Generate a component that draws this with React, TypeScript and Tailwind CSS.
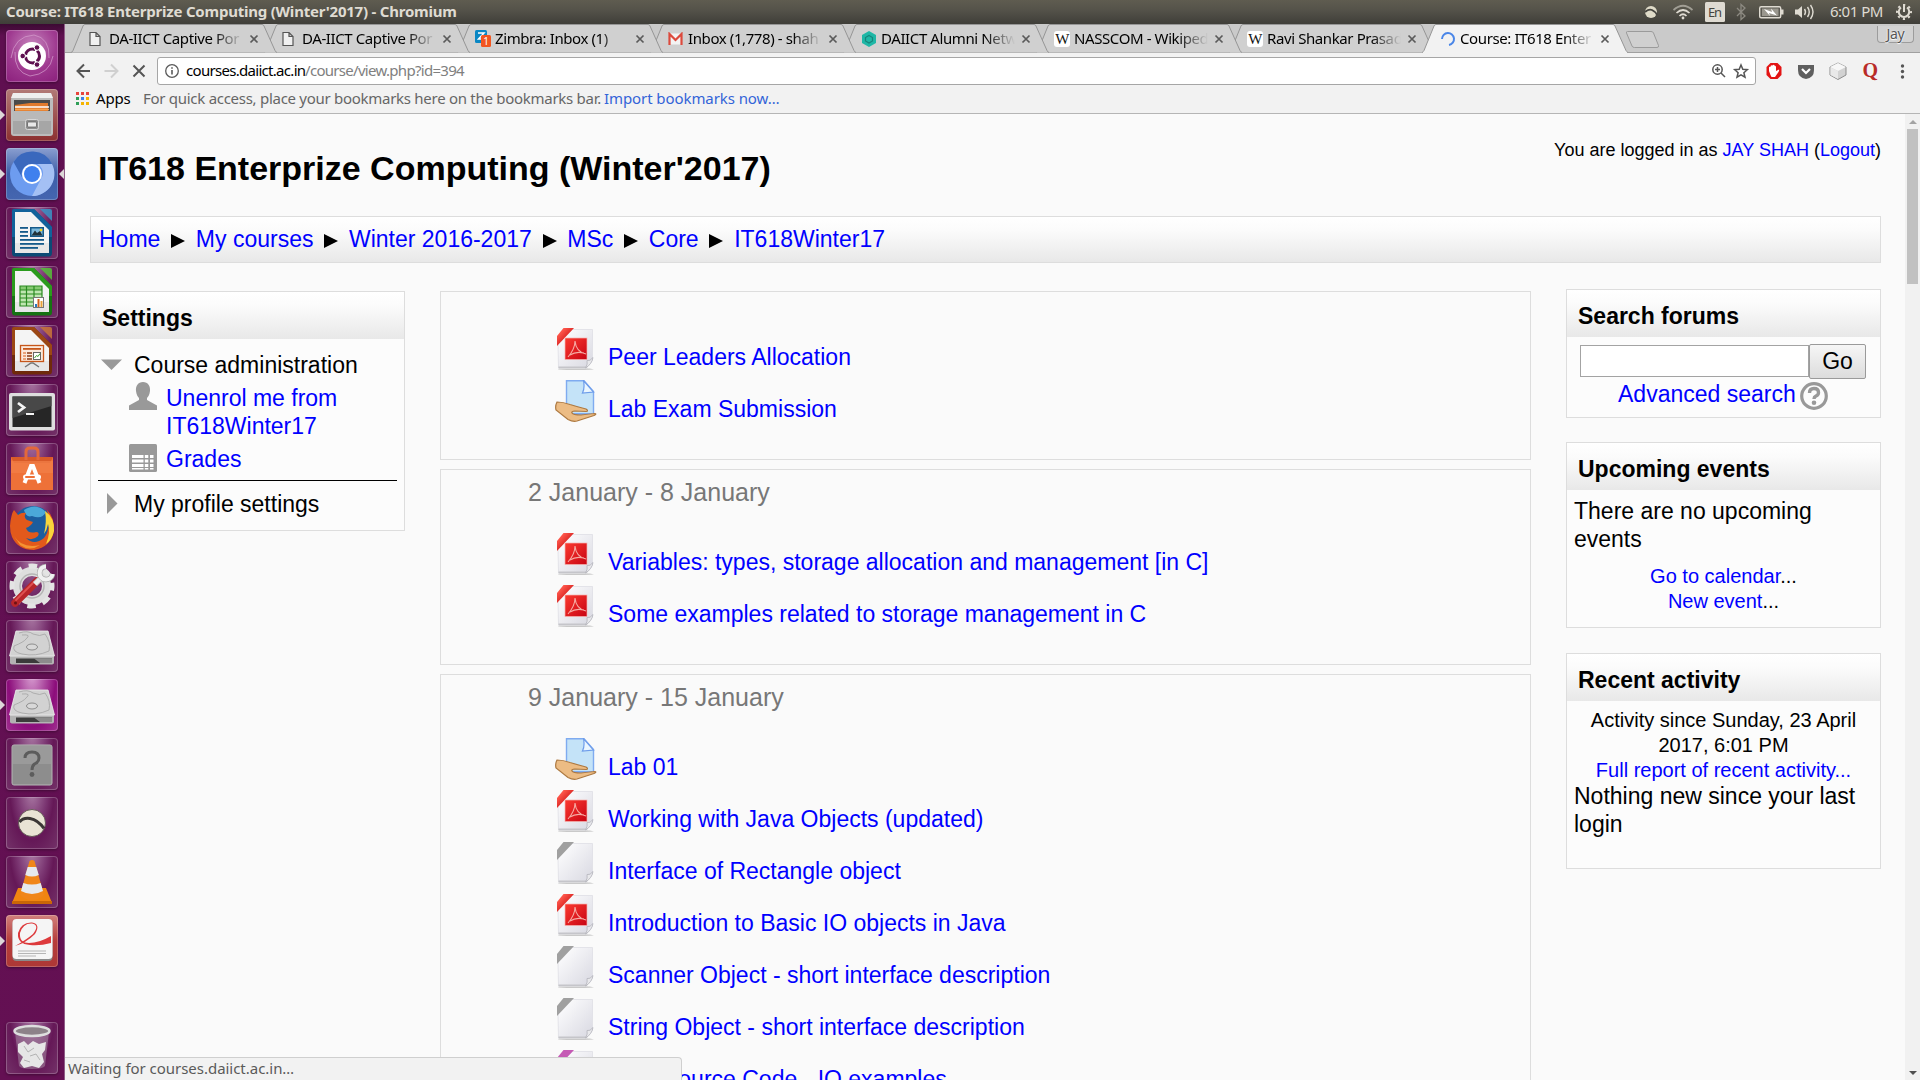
import React from "react";

const UI = "font-['Noto_Sans','Open_Sans',sans-serif]";

/* ---------- launcher ---------- */

function Tile({ bg, tall, left, right, children }: { bg: string; tall?: boolean; left?: boolean; right?: boolean; children: React.ReactNode }) {
  return (
    <div className={"relative flex h-[52px] w-16 shrink-0 justify-center " + (tall ? "mt-auto" : "")}>
      {left && <div className="absolute left-0 top-[21px] h-0 w-0 border-y-[5px] border-l-[5px] border-y-transparent border-l-[#dcd8d8]" />}
      {right && <div className="absolute right-0 top-[21px] h-0 w-0 border-y-[5px] border-r-[5px] border-y-transparent border-r-[#dcd8d8]" />}
      <div className={"h-[52px] w-[52px] overflow-hidden rounded-[4px] shadow-[inset_0_0_0_1px_rgba(255,255,255,0.22),0_1px_3px_rgba(0,0,0,0.35)] " + bg}>
        <svg width="52" height="52" viewBox="0 0 52 52">
          {children}
        </svg>
      </div>
    </div>
  );
}

const PLAIN = "bg-[radial-gradient(ellipse_at_50%_-10%,#ab7ba5_0%,#7b3672_40%,#651857_60%,#743369_100%)]";

function OfficeDoc({ dark, mid, light, children }: { dark: string; mid: string; light: string; children: React.ReactNode }) {
  return (
    <>
      <path d={"M8 2 H28 L46 20 V46 Q46 49.5 43 49.5 H9 Q6 49.5 6 46 V4 Q6 2 8 2Z"} fill={dark} />
      <path d="M8 2 H28 L46 20 V30 H6 V4 Q6 2 8 2Z" fill={mid} />
      <path d="M34 2 H44 Q46 2 46 4 V14Z" fill={light} opacity="0.85" />
      <path d="M9 5 H25 L43 23 V46 H9Z" fill="#f4f4f4" />
      <path d="M9 36 H43 V46 H9Z" fill="#d9d9d9" opacity="0.5" />
      {children}
    </>
  );
}

function Drive() {
  return (
    <>
      <path d="M10 11 H42 L48 36 V42 Q48 44 46 44 H6 Q4 44 4 42 V36Z" fill="#bdbdbd" />
      <path d="M10 11 H42 L48.500 36 H3.500Z" fill="#d2d2d2" stroke="#ebebeb" strokeWidth="0.8" />
      <path d="M13 13 Q22 10 27 14 Q34 17 39 14 Q45 22 43 31 Q30 37 16 34 Q6 32 8 26 Q18 22 20 19 Q26 14 16 15" fill="none" stroke="#a3a3a3" strokeWidth="0.8" />
      <ellipse cx="26" cy="27" rx="5.500" ry="3" fill="#d8d8d8" stroke="#8d8d8d" />
      <path d="M4 37 H48 V41 Q48 44.500 46 44.500 H6 Q4 44.500 4 41Z" fill="#b3b3b3" />
      <path d="M10 38.500 H46 V43 H10Z" fill="#3b3b3b" />
      <path d="M28 38.500 H46 V43 H34Z" fill="#8c8c8c" />
    </>
  );
}

function Launcher() {
  return (
    <aside className="relative flex w-[65px] shrink-0 flex-col gap-[7px] border-r border-[#8f5c87] bg-[linear-gradient(180deg,#3c0a33_0px,#5f0f50_12px,#641053_100%)] pb-[6px] pt-[6px]">
      <Tile bg="bg-[radial-gradient(circle_at_50%_30%,#c684bd_0%,#9f3a90_55%,#8b1f7c_100%)]">
        <path d="M5 28 Q8 6 28 5 Q44 8 43 28" fill="none" stroke="#d5a0cf" strokeWidth="1" opacity="0.7" />
        <path d="M47 26 Q44 44 24 46 Q8 42 9 22" fill="none" stroke="#d5a0cf" strokeWidth="1" opacity="0.7" />
        <circle cx="26" cy="26" r="14" fill="#fff" />
        <circle cx="26.500" cy="26" r="7" fill="none" stroke="#5e1050" strokeWidth="3" strokeDasharray="12.700 2" strokeDashoffset="-8.300" />
        <circle cx="16.700" cy="26" r="2.800" fill="#5e1050" stroke="#fff" />
        <circle cx="31" cy="17.500" r="2.800" fill="#5e1050" stroke="#fff" />
        <circle cx="31" cy="34.600" r="2.800" fill="#5e1050" stroke="#fff" />
      </Tile>
      <Tile left bg="bg-[linear-gradient(180deg,#b27a77,#8c3030)]">
        <path d="M7 4 H45 L47 10 V44 Q47 47 44 47 H8 Q5 47 5 44 V10Z" fill="#bcbcbc" />
        <path d="M7 4 H45 L47 9 H5Z" fill="#efefef" />
        <path d="M8 11 H44 V22 H8Z" fill="#4a4a4a" />
        <path d="M9 16 L24 14 H42 V22 H9Z" fill="#e07a2d" />
        <path d="M9 18 H43" stroke="#fff" strokeWidth="1.300" />
        <path d="M9 20.500 H43" stroke="#f6a352" strokeWidth="1.500" />
        <path d="M7 22 H45 V45 H7Z" fill="#a6a6a6" />
        <path d="M7 22 H45 V32 H7Z" fill="#b9b9b9" />
        <rect x="19.500" y="30.500" width="13" height="10" rx="2" fill="#8e8e8e" stroke="#d8d8d8" />
        <rect x="21.500" y="33" width="9" height="5" rx="1" fill="#e8e8e8" stroke="#555" strokeWidth="0.7" />
      </Tile>
      <Tile left right bg="bg-[linear-gradient(180deg,#8a9fd0,#3d5ea8_50%,#4566b0)]">
        <circle cx="26" cy="26" r="22" fill="#6d9cf0" />
        <path d="M7.500 14 A22 22 0 0 1 46 16 H26 A10 10 0 0 0 17 31Z" fill="#3a68bd" />
        <path d="M46 16 A22 22 0 0 1 26 48 L35 31 A10 10 0 0 0 31 16Z" fill="#a4c0f4" />
        <circle cx="26" cy="26" r="10" fill="#fff" />
        <circle cx="26" cy="26" r="8" fill="#3f80ee" />
      </Tile>
      <Tile bg={PLAIN}>
        <OfficeDoc dark="#0b4a75" mid="#11629b" light="#3a94c5">
          <g fill="#155a8a">
            <rect x="14" y="20" width="8" height="1.800" /><rect x="14" y="24" width="8" height="1.800" /><rect x="14" y="28" width="8" height="1.800" />
            <rect x="14" y="32" width="24" height="1.800" /><rect x="14" y="36" width="24" height="1.800" /><rect x="14" y="40" width="18" height="1.800" />
            <rect x="24" y="20" width="14" height="10" />
          </g>
          <rect x="25.500" y="21.500" width="11" height="7" fill="#7cb9dc" />
          <path d="M25.500 28.500 L29 23.500 L31 26 L34 24 L36.500 28.500Z" fill="#20323a" />
          <circle cx="35" cy="23" r="1.300" fill="#f2d21b" />
        </OfficeDoc>
      </Tile>
      <Tile bg={PLAIN}>
        <OfficeDoc dark="#157312" mid="#2b9b1d" light="#56c03a">
          <rect x="14" y="20" width="22" height="20" fill="#bfe6b1" />
          <rect x="14" y="20" width="22" height="4" fill="#86ca72" />
          <path d="M14 20 H36 V40 H14Z M14 24 H36 M14 28 H36 M14 32 H36 M14 36 H36 M20.500 20 V40 M28 20 V40" fill="none" stroke="#2a8a20" strokeWidth="1.200" />
          <rect x="27.500" y="31.500" width="10" height="10" fill="#fff" stroke="#777" />
          <path d="M29 38 h2 v3 h-2z" fill="#2b78c0" /><path d="M31.500 33 h2 v8 h-2z" fill="#d6601b" /><path d="M34.500 35 h2 v6 h-2z" fill="#e8a33a" />
        </OfficeDoc>
      </Tile>
      <Tile bg={PLAIN}>
        <OfficeDoc dark="#6f2a0b" mid="#9b4714" light="#c87638">
          <rect x="14.500" y="20.500" width="23" height="16" fill="#fbe9dc" stroke="#c6561a" strokeWidth="1.300" />
          <rect x="17" y="23" width="18" height="1.800" fill="#c6561a" />
          <path d="M17 28 h3 M17 31 h3 M17 34 h3" stroke="#e38b58" strokeWidth="1.600" />
          <path d="M21 28 h5 M21 31 h5 M21 34 h5" stroke="#8a3b14" strokeWidth="1.600" />
          <rect x="27.500" y="27.500" width="7" height="7" fill="#fff" stroke="#666" />
          <path d="M28.500 33 L30.500 30.500 L32 31.500 L34 28.500" stroke="#3a9a2a" fill="none" />
          <path d="M19 42 L25 38 H27 L33 42" fill="none" stroke="#777" strokeWidth="1.500" />
        </OfficeDoc>
      </Tile>
      <Tile bg={PLAIN}>
        <rect x="3" y="9" width="46" height="37.500" rx="2" fill="#dedede" />
        <rect x="6.500" y="12.500" width="39" height="30.500" fill="#262626" />
        <path d="M6.500 12.500 H45.500 V22 L6.500 34Z" fill="#484848" />
        <path d="M12 19 L18 23.500 L12 28" fill="none" stroke="#f4f4f4" strokeWidth="2.800" />
        <path d="M20 30 H28" stroke="#f4f4f4" strokeWidth="2" />
      </Tile>
      <Tile bg={PLAIN}>
        <path d="M5 14 H47 V47 H5Z" fill="#ee7138" />
        <path d="M5 14 H47 L44 20 H8Z" fill="#d95b28" />
        <path d="M5 18 H47 V30 H5Z" fill="#f28049" opacity="0.7" />
        <path d="M20 17 V9 Q20 5 24 5 H28 Q32 5 32 9 V17" fill="none" stroke="#e3683b" strokeWidth="3" />
        <path d="M18.500 40 L25 23 H27 L33.500 40" fill="none" stroke="#fff" strokeWidth="4" />
        <rect x="17" y="31.500" width="18" height="5" rx="2.500" fill="#fff" />
        <rect x="19" y="33" width="10" height="2" rx="1" fill="#ee7138" />
      </Tile>
      <Tile bg={PLAIN}>
        <circle cx="27" cy="24" r="20" fill="#1c5d9e" />
        <path d="M18 8 Q30 0 40 10 Q36 18 26 14 Q20 16 18 8Z" fill="#4ba8d8" />
        <path d="M4 24 Q5 12 8 8 L12 13 Q16 10 20 11 Q17 15 21 18 L27 20 Q25 24 20 26 Q22 32 30 30 Q34 30 32 34 Q27 39 20 36 Q28 44 38 36 Q46 26 41 8 Q49 16 48 29 Q45 45 28 48 Q12 48 6 35 Q4 30 4 24Z" fill="#e2591b" />
        <path d="M39 9 Q49 16 48 29 Q46 38 40 42 Q45 30 42 22 Q41 28 38 32 Q41 20 39 9Z" fill="#f9d53c" />
        <path d="M8 34 Q16 47 34 43 Q24 50 14 43Z" fill="#f59332" />
      </Tile>
      <Tile bg={PLAIN}>
        <circle cx="26" cy="25" r="14.500" fill="none" stroke="#dedede" strokeWidth="9" />
        <circle cx="26" cy="25" r="20" fill="none" stroke="#e4e4e4" strokeWidth="5" strokeDasharray="8.500 7.208" strokeDashoffset="4" />
        <circle cx="26" cy="25" r="12" fill="none" stroke="#b5b5b5" strokeWidth="1.500" />
        <path d="M9 42 L31 20" stroke="#b8262a" strokeWidth="7.500" strokeLinecap="round" />
        <path d="M10 39 L28 21" stroke="#e05252" strokeWidth="1.800" strokeLinecap="round" />
        <path d="M29 23 L37 15" stroke="#c4c4c4" strokeWidth="6" />
        <path d="M29 23 L37 15" stroke="#ececec" strokeWidth="4" />
        <path d="M40 5.500 A6.500 6.500 0 1 0 46.500 13" fill="none" stroke="#aaaaaa" strokeWidth="5.500" />
        <path d="M40 5.500 A6.500 6.500 0 1 0 46.500 13" fill="none" stroke="#f0f0f0" strokeWidth="4.200" />
        <circle cx="9.500" cy="42" r="1.500" fill="#6b1114" />
      </Tile>
      <Tile bg={PLAIN}><Drive /></Tile>
      <Tile left bg="bg-[radial-gradient(ellipse_at_50%_-10%,#d9a0d2_0%,#a8439b_40%,#8c0d7b_65%,#a0308f_100%)]"><Drive /></Tile>
      <Tile bg={PLAIN}>
        <rect x="6" y="7" width="40" height="40" rx="2" fill="#8d8d8d" stroke="#b5b5b5" />
        <rect x="7" y="8" width="38" height="18" fill="#a0a0a0" opacity="0.7" />
        <path d="M19 20 Q19 14 26 14 Q33 14 33 20 Q33 24 28.500 26 Q26 28 26 32" fill="none" stroke="#5c5c5c" strokeWidth="3" />
        <circle cx="26" cy="36.500" r="2.400" fill="#5c5c5c" />
      </Tile>
      <Tile bg={PLAIN}>
        <circle cx="26" cy="26" r="13.500" fill="#e9e4d4" stroke="#504a44" strokeWidth="0.8" />
        <path d="M13.500 25 Q17 20.500 24 21.500 Q32 23 38 31.500" fill="none" stroke="#3b3835" strokeWidth="3" />
      </Tile>
      <Tile bg={PLAIN}>
        <path d="M12 32 H40 L46 47 H6Z" fill="#f08510" />
        <path d="M6 45 H46 V48 H6Z" fill="#c96607" />
        <path d="M23.500 5 Q26 3 28.500 5 L38 39 Q33 44 26 44 Q19 44 14 39Z" fill="#f0861a" />
        <path d="M21.700 11 H30.300 L32.800 19 Q26 22 19.300 19Z" fill="#e6e9ee" />
        <path d="M17.300 27 Q26 30 34.700 27 L37 35 Q26 41 15 35Z" fill="#e6e9ee" />
      </Tile>
      <Tile left bg="bg-[linear-gradient(180deg,#d0807c,#b73c3a_50%,#ad3836)]">
        <rect x="6.500" y="5" width="40" height="41" rx="4" fill="#8a8a8a" />
        <rect x="6.500" y="4" width="40" height="40" rx="4" fill="#f5f5f5" />
        <path d="M9 31 Q20 25 27 19 Q34 10 26 8.500 Q17 8 14 18 Q13 28 23 28 Q33 28 45 21 V28 Q34 31 24 30 Q11 29 12 18 Q15 7 26 7.500 Q35 9 29 19 Q20 28 9 31Z" fill="#dd3a3c" />
        <path d="M12 36 H40 M12 38.500 H40 M12 41 H30" stroke="#b5b5b5" />
      </Tile>
      <Tile tall bg={PLAIN}>
        <path d="M9 10 H43 L39 44 Q37 47 26 47 Q15 47 13 44Z" fill="#a58aa3" opacity="0.55" />
        <path d="M12 22 L18 19 L22 23 L27 19 L33 22 L40 20 L39 28 L36 32 L38 40 L33 46 L26 44 L18 46 L14 41 L17 35 L12 30Z" fill="#e6e6e6" />
        <path d="M18 24 L22 30 L28 26 M24 34 L30 32 L34 38 M18 38 L24 40" stroke="#b3b3b3" fill="none" />
        <ellipse cx="26" cy="9" rx="17.500" ry="5" fill="#8d8289" stroke="#dedede" strokeWidth="2.500" />
      </Tile>
    </aside>
  );
}

/* ---------- desktop panel ---------- */

function Panel() {
  return (
    <header className={UI + " flex h-6 shrink-0 items-center bg-[linear-gradient(180deg,#5f5c50_0%,#55534a_40%,#3f3e39_100%)] pl-[6px] text-[#dfdbd2]"}>
      <div className="w-[1639px] whitespace-nowrap pb-[2px] text-[15px] font-bold leading-[22px] tracking-[-0.22px]">Course: IT618 Enterprize Computing (Winter'2017) - Chromium</div>
      <svg width="185" height="24" viewBox="1645 0 185 24" className="shrink-0">
        <circle cx="1651" cy="12" r="6" fill="#dfdbc8" />
        <path d="M1645 12 Q1649 8.500 1652 10 Q1656 12 1657 15" fill="none" stroke="#45443f" strokeWidth="1.800" />
        <g fill="none" stroke="#dfdbd2" strokeWidth="1.700">
          <path d="M1673.500 10 Q1683 1.500 1692.500 10" opacity="0.55" />
          <path d="M1676.500 13 Q1683 7 1689.500 13" />
          <path d="M1679.500 16 Q1683 12.500 1686.500 16" />
        </g>
        <circle cx="1683" cy="18" r="1.400" fill="#dfdbd2" />
        <rect x="1705" y="2" width="20" height="20" rx="1.500" fill="#dfdbd2" />
        <text x="1708" y="17" fontSize="13" fill="#45443f" fontFamily="Noto Sans" textLength="14">En</text>
        <path d="M1737 8 L1745 16 L1741 19.500 V4.500 L1745 8 L1737 16" fill="none" stroke="#8d8a82" strokeWidth="1.300" />
        <rect x="1759.700" y="6.700" width="21" height="11" rx="1.500" fill="#5c5a53" stroke="#dfdbd2" strokeWidth="1.400" />
        <rect x="1762" y="8.500" width="16.500" height="7.500" fill="#9a978e" />
        <rect x="1781" y="9.500" width="2.500" height="5" fill="#dfdbd2" />
        <path d="M1764 9 L1772 12 L1771 8.500 L1777 15.500 L1769 13 L1770 16Z" fill="#fff" />
        <path d="M1795 9.500 H1798 L1802 6 V18 L1798 14.500 H1795Z" fill="#dfdbd2" />
        <g fill="none" stroke="#dfdbd2" strokeWidth="1.400">
          <path d="M1804.500 9 Q1806.500 12 1804.500 15" />
          <path d="M1807.500 7 Q1811 12 1807.500 17" />
          <path d="M1810.500 5 Q1815.500 12 1810.500 19" />
        </g>
      </svg>
      <div className="w-[64px] whitespace-nowrap pb-[2px] text-[15px] leading-[22px] tracking-[-0.5px]">6:01 PM</div>
      <svg width="20" height="24" viewBox="0 0 20 24" fill="none" stroke="#dfdbd2">
        <path d="M7 7.500 A5.200 5.200 0 1 0 13 7.500" strokeWidth="2" />
        <path d="M10 4 V12" strokeWidth="2" />
        <circle cx="10" cy="12" r="7" strokeWidth="2" strokeDasharray="2.200 3.298" strokeDashoffset="1.100" />
      </svg>
    </header>
  );
}

/* ---------- browser chrome ---------- */

const PageIcon = () => (
  <svg width="16" height="16" viewBox="0 0 16 16" fill="#f0f0f0" stroke="#555" strokeWidth="1.200">
    <path d="M1 1.500 H7 L11 5.500 V14.500 H1Z M7 1.500 V5.500 H11" />
  </svg>
);
const WikiIcon = () => (
  <span className="flex h-4 w-4 items-center justify-center rounded-[3px] bg-white font-['Liberation_Serif',serif] text-[15px] leading-4 tracking-tighter text-[#111]">W</span>
);
const ZimbraIcon = () => (
  <svg width="16" height="17" viewBox="0 0 16 17">
    <rect width="12" height="13" rx="1.500" fill="#0a87c4" />
    <path d="M3 3 H9 L3.500 9 H8" fill="none" stroke="#fff" strokeWidth="1.500" />
    <rect x="6" y="5" width="10" height="12" rx="1.500" fill="#f2551f" />
    <text x="8.200" y="15" fontSize="10" fill="#fff" fontFamily="Noto Sans">1</text>
  </svg>
);
const GmailIcon = () => (
  <svg width="16" height="14" viewBox="0 0 16 14">
    <rect x="1" y="1.500" width="13" height="11" fill="#f3f3f3" />
    <path d="M1.500 13 V2 L7.500 8 L13.500 2 V13" fill="none" stroke="#dc4a3d" strokeWidth="2.200" />
  </svg>
);
const HexIcon = () => (
  <svg width="16" height="16" viewBox="0 0 16 16">
    <path d="M8 0 L15 4 V12 L8 16 L1 12 V4Z" fill="#1fb7a6" />
    <path d="M8 4.500 L11.500 6.500 V10 L8 12 L4.500 10 V6.500Z" fill="none" stroke="#17847a" strokeWidth="1.200" />
  </svg>
);
const SpinIcon = () => (
  <svg width="16" height="16" viewBox="0 0 16 16">
    <path d="M2 8 A6 6 0 1 1 9 14" fill="none" stroke="#4a86e8" strokeWidth="2" />
  </svg>
);

const tabs = [
  { t: "DA-IICT Captive Por", i: <PageIcon />, z: "z-[8]" },
  { t: "DA-IICT Captive Por", i: <PageIcon />, z: "z-[7]" },
  { t: "Zimbra: Inbox (1)", i: <ZimbraIcon />, z: "z-[6]" },
  { t: "Inbox (1,778) - shah", i: <GmailIcon />, z: "z-[5]" },
  { t: "DAIICT Alumni Netw", i: <HexIcon />, z: "z-[4]" },
  { t: "NASSCOM - Wikiped", i: <WikiIcon />, z: "z-[3]" },
  { t: "Ravi Shankar Prasad", i: <WikiIcon />, z: "z-[2]" },
  { t: "Course: IT618 Enter", i: <SpinIcon />, z: "z-[9]", on: true },
];

function TabStrip() {
  return (
    <div className="relative flex h-[29px] bg-[#cacaca] pl-[6px] shadow-[inset_0_-1px_0_#a0a0a0]">
      {tabs.map((t, i) => (
        <div key={i} className={"relative flex h-[29px] w-[193px] shrink-0 items-center pl-[18px] " + t.z}>
          <svg className="absolute left-0 top-0" width="207" height="29" viewBox="0 0 207 29">
            <path d="M0 28.500 Q1.500 28 2 26.500 L12 2 Q12.600 .5 14 .5 H191 Q192.500 .5 193 2 L204 26.500 Q204.500 28 206 28.500" fill={t.on ? "#f2f2f2" : "#d0d0d0"} stroke="#969696" />
            {t.on && <path d="M1 28.500 H205" stroke="#f2f2f2" strokeWidth="1.500" />}
          </svg>
          <div className="relative flex w-4 shrink-0 justify-center">{t.i}</div>
          <div className={"relative mb-[2px] ml-1 h-[22px] w-[134px] whitespace-nowrap text-[15px] leading-[22px] tracking-[-0.4px] text-black [mask-image:linear-gradient(90deg,#000_104px,transparent_134px)]"}>{t.t}</div>
          <svg className="relative ml-[5px]" width="12" height="12" viewBox="0 0 12 12">
            <path d="M2.500 2.500 L9.500 9.500 M9.500 2.500 L2.500 9.500" stroke="#5a5a5a" strokeWidth="1.700" />
          </svg>
        </div>
      ))}
      <svg className="ml-[10px] mt-[6px]" width="36" height="19" viewBox="0 0 36 19">
        <path d="M2.500 1.500 H26 Q28 1.500 28.500 3 L33.500 15.500 Q34 17.500 32 17.500 H9.500 Q7.500 17.500 7 16 L1.500 3 Q1 1.500 2.500 1.500Z" fill="#d0d0d0" stroke="#9b9b9b" />
      </svg>
      <div className="ml-auto mr-[6px] mt-[2px] flex h-[17px] w-[37px] items-center justify-center rounded-b-[4px] border border-t-0 border-[#9c9c9c] bg-[#d2d2d2] text-[14px] leading-4 tracking-tight text-[#555] [text-shadow:0_0_2px_#fff,0_1px_1px_#fff]">Jay</div>
    </div>
  );
}

function Toolbar() {
  return (
    <div className="flex h-[36px] items-center bg-[#f2f2f2]">
      <svg width="92" height="28" viewBox="65 57 92 28" fill="none" strokeWidth="2">
        <path d="M90 71 H77.500 M84 64.500 L77.500 71 L84 77.500" stroke="#555" />
        <path d="M104.500 71 H117 M111 64.500 L117.500 71 L111 77.500" stroke="#d0d0d0" />
        <path d="M133.500 65.500 L144.500 76.500 M144.500 65.500 L133.500 76.500" stroke="#555" />
      </svg>
      <div className="flex h-7 w-[1599px] items-center rounded-[3px] border border-[#a6a6a6] bg-white pl-[6px] text-[15px]">
        <svg width="16" height="16" viewBox="0 0 16 16" fill="none" stroke="#5a5a5a" strokeWidth="1.300">
          <circle cx="8" cy="8" r="6.300" /><path d="M8 7 V11.500 M8 4.300 V5.800" strokeWidth="1.600" />
        </svg>
        <div className="mb-[2px] ml-[6px] w-[119px] whitespace-nowrap tracking-[-0.7px] text-black">courses.daiict.ac.in</div>
        <div className="mb-[2px] whitespace-nowrap tracking-[-0.7px] text-[#808080]">/course/view.php?id=394</div>
        <svg className="ml-auto mr-[5px]" width="40" height="20" viewBox="1710 61 40 20" fill="none" stroke="#555" strokeWidth="1.500">
          <circle cx="1717.500" cy="69.500" r="4.700" /><path d="M1721 73 L1725 77 M1715 69.500 H1720 M1717.500 67 V72" />
          <path d="M1741 65 L1742.800 69.300 L1747.300 69.700 L1743.900 72.700 L1745 77.200 L1741 74.800 L1737 77.200 L1738.100 72.700 L1734.700 69.700 L1739.200 69.300Z" />
        </svg>
      </div>
      <svg width="160" height="28" viewBox="1756 57 160 28">
        <path d="M1770.500 63 H1777.500 L1781.500 67 V75 L1777.500 79 H1770.500 L1766.500 75 V67Z" fill="#e31414" />
        <path d="M1770.500 75 L1769 71 V67.500 Q1769 66.500 1770.500 67 V66 Q1771.500 65 1772.500 65.500 Q1773.500 64 1774.500 65.500 Q1776 65.500 1776 67 V71 L1779 69.500 Q1779.500 70.500 1778.500 72 L1775 77 H1771.500Z" fill="#fff" />
        <path d="M1798 65 H1814 V70 Q1814 78 1806 79 Q1798 78 1798 70Z" fill="#5f5f5f" />
        <path d="M1802 69 L1806 73 L1810 69" fill="none" stroke="#fff" strokeWidth="2.200" />
        <path d="M1838 63 L1846 67 V75 L1838 79.500 L1830 75 V67Z" fill="#d2d2d2" stroke="#8d8d8d" />
        <path d="M1830 67 L1838 71 L1846 67 L1838 63Z" fill="#f7f7f7" />
        <path d="M1830.500 67.500 L1838 71 V79 L1830.500 75Z" fill="#e9e9e9" />
        <text x="1862.500" y="77" fontFamily="Liberation Serif" fontWeight="700" fontSize="20" fill="#b92b27">Q</text>
        <g fill="#555"><circle cx="1902.500" cy="66" r="1.700" /><circle cx="1902.500" cy="71.500" r="1.700" /><circle cx="1902.500" cy="77" r="1.700" /></g>
      </svg>
    </div>
  );
}

function Bookmarks() {
  const colors = ["bg-[#e8453c]", "bg-[#e8453c]", "bg-[#e8453c]", "bg-[#2f9e57]", "bg-[#3f7fe8]", "bg-[#f5b400]", "bg-[#2f9e57]", "bg-[#f5b400]", "bg-[#f5b400]"];
  return (
    <div className="flex h-[25px] items-center border-b border-[#b5b5b5] bg-[#f2f2f2] pb-[5px] pl-[11px] text-[15px] leading-5">
      <div className="grid grid-cols-[repeat(3,3px)] gap-[2px]">
        {colors.map((c, i) => <div key={i} className={"h-[3px] w-[3px] " + c} />)}
      </div>
      <div className="mb-[2px] ml-[7px] w-[47px] tracking-[-0.2px] text-black">Apps</div>
      <div className="mb-[2px] w-[461px] whitespace-nowrap tracking-[-0.28px] text-[#666]">For quick access, place your bookmarks here on the bookmarks bar.</div>
      <div className="mb-[2px] whitespace-nowrap tracking-[-0.08px] text-[#3264d8]">Import bookmarks now…</div>
    </div>
  );
}

/* ---------- course page ---------- */

const A = ({ children, className = "" }: { children: React.ReactNode; className?: string }) => (
  <a className={"text-[#0000ff] " + className}>{children}</a>
);

function FileIcon({ kind }: { kind: string }) {
  if (kind === "assign")
    return (
      <svg width="42" height="42" viewBox="0 0 42 42">
        <path d="M11.500 .7 H29 L38.500 11.500 V35 H11.500Z" fill="#c4e3f8" stroke="#7fabf0" strokeWidth="1.400" />
        <path d="M28.500 .7 L38.500 12 L27.500 13 Q30 8 28.500 .7Z" fill="#eaf6ff" stroke="#6d9cea" strokeWidth="1.200" />
        <path d="M16 34 H37" stroke="#7fabf0" strokeWidth="2" />
        <path d="M2 22 Q8 22 15 24.500 Q23 27 31 29 Q34 31 31 31.500 L20 31 Q16 31.500 17 33 Q18 35 26 35 Q34 34 40 33.500 Q42 34 39 35.500 L22 41 Q18 42 13 39.500 L1 30 Q0 26 2 22Z" fill="#ecbc84" stroke="#ad7941" strokeWidth="1.200" />
      </svg>
    );
  const pdf = kind === "pdf";
  const c = kind === "src" ? "#c55bb5" : pdf ? "url(#ribbon)" : "#a0a0a0";
  return (
    <svg width="42" height="42" viewBox="0 0 42 42">
      <defs>
        <linearGradient id="sheet" x1="0" y1="0" x2="1" y2="1"><stop offset="0.200" stopColor="#f8f8fa" /><stop offset="1" stopColor="#d8d8e1" /></linearGradient>
        <linearGradient id="red" x1="0" y1="0" x2="1" y2="1"><stop stopColor="#fb3a30" /><stop offset="1" stopColor="#c80413" /></linearGradient>
        <linearGradient id="ribbon" x1="0" y1="0" x2="1" y2="1"><stop offset="0.200" stopColor="#ff5a4e" /><stop offset="0.600" stopColor="#d8211f" /></linearGradient>
      </defs>
      <path d="M4 40.500 H35 L39 41.500 Q20 42.500 3 41.500Z" fill="#c9c9c9" />
      <path d="M3 15 L17 1.500 H37.500 V32 Q35 37 31 40 H3.500Z" fill="url(#sheet)" stroke="#dedee4" strokeWidth="0.8" />
      <path d="M3.500 38.500 H31 L33 40.300 H3.500Z" fill="#c5c5ca" />
      <path d="M30.500 40 Q33 36 32 32.500 Q35 33.500 38 29.500 Q37 36 30.500 40Z" fill="#e9e9ec" stroke="#b4b4bb" strokeWidth="0.8" />
      <path d="M2 8 L8.500 0 H19 L2 18Z" fill={c} />
      {pdf && (
        <>
          <rect x="10" y="10" width="22" height="21.500" fill="url(#red)" stroke="#f6b4b0" strokeWidth="0.7" />
          <path d="M20 13 Q20 21 13 29 M20 13 Q21 24 31 26 M15 27 Q21 23 29 25" fill="none" stroke="#f5aaa2" strokeWidth="1.100" />
        </>
      )}
    </svg>
  );
}

function Item({ kind, children }: { kind: string; children: React.ReactNode }) {
  return (
    <li className="flex h-[52px]">
      <div className="h-[42px] w-[42px] shrink-0"><FileIcon kind={kind} /></div>
      <A className="ml-[11px] mt-[15px] h-7 whitespace-nowrap">{children}</A>
    </li>
  );
}

function Section({ title, h, children }: { title?: string; h: string; children: React.ReactNode }) {
  return (
    <section className={"shrink-0 border border-[#dddddd] bg-[#fafafa] " + h}>
      {title ? <h3 className="mt-[8px] h-[28px] pl-[87px] text-[25px] leading-7 text-[#777]">{title}</h3> : null}
      <ul className={"pl-[114px] " + (title ? "mt-[27px]" : "mt-[36px]")}>{children}</ul>
    </section>
  );
}

function Block({ title, h, children }: { title: string; h: string; children: React.ReactNode }) {
  return (
    <section className={"border border-[#dddddd] bg-[#fcfcfc] " + h}>
      <h2 className="h-[47px] bg-[linear-gradient(180deg,#ffffff,#fbfbfb_30%,#e8e8e8)] pl-[11px] pt-[12px] font-bold leading-7">{title}</h2>
      {children}
    </section>
  );
}

const crumbs = ["Home", "My courses", "Winter 2016-2017", "MSc", "Core", "IT618Winter17"];

function CoursePage() {
  return (
    <main className="flex h-[966px] flex-col overflow-hidden bg-[#fafafa] pl-[25px] pr-6 font-['Liberation_Sans',Arial,sans-serif] text-[23px] leading-7 text-black">
      <div className="flex h-[102px] shrink-0 justify-between">
        <h1 className="mt-[34px] pl-[8px] text-[34px] font-bold leading-[40px]">IT618 Enterprize Computing (Winter'2017)</h1>
        <div className="mt-[24px] text-[18px] leading-6">You are logged in as <A>JAY SHAH</A> (<A>Logout</A>)</div>
      </div>
      <nav className="flex h-[47px] shrink-0 items-center border border-[#dddddd] bg-[linear-gradient(180deg,#ffffff,#fbfbfb_30%,#e8e8e8)] pb-[1px] pl-[8px]">
        {crumbs.map((c, i) => (
          <React.Fragment key={c}>
            {i > 0 && (
              <svg className="mx-[10.750px] mt-[3px]" width="14" height="14" viewBox="0 0 14 14"><path d="M0 0 L14 7 L0 14Z" /></svg>
            )}
            <A>{c}</A>
          </React.Fragment>
        ))}
      </nav>
      <div className="mt-[28px] flex items-start">
        <Block title="Settings" h="h-[240px] w-[315px]">
          <div className="flex pl-[10px] pt-[12px]">
            <svg className="mt-[8px]" width="22" height="12" viewBox="0 0 22 12"><path d="M0 .5 H21 L10.500 11Z" fill="#999" /></svg>
            <span className="ml-[11px]">Course administration</span>
          </div>
          <div className="flex pl-[38px] pt-[5px]">
            <svg className="-mt-[2px]" width="28" height="28" viewBox="0 0 28 28">
              <path d="M14 0 C19 0 21.500 4 21 9 C20.500 13 19 15 18 16 V18 L28 23.500 V28 H0 V23.500 L10 18 V16 C9 15 7.500 13 7 9 C6.500 4 9 0 14 0Z" fill="#999" />
            </svg>
            <A className="ml-[9px] w-[190px]">Unenrol me from IT618Winter17</A>
          </div>
          <div className="flex pl-[38px] pt-[5px]">
            <svg className="-mt-[1px]" width="28" height="28" viewBox="0 0 28 28">
              <rect width="28" height="28" rx="1.500" fill="#999" />
              <g fill="#fff">
                {[11, 15.500, 20].map((y) => (
                  <React.Fragment key={y}>
                    <rect x="3" y={y} width="11.500" height="3" /><rect x="15.800" y={y} width="3.500" height="3" /><rect x="21" y={y} width="3.500" height="3" />
                  </React.Fragment>
                ))}
                <rect x="3" y="24" width="11.500" height="1.500" /><rect x="15.800" y="24" width="3.500" height="1.500" /><rect x="21" y="24" width="3.500" height="1.500" />
              </g>
            </svg>
            <A className="ml-[9px]">Grades</A>
          </div>
          <div className="mx-[7px] mt-[7px] h-px bg-black" />
          <div className="flex pl-[16px] pt-[9px]">
            <svg className="mt-[3px]" width="11" height="21" viewBox="0 0 11 21"><path d="M0 0 L10.500 10.500 L0 21Z" fill="#999" /></svg>
            <span className="ml-[16px]">My profile settings</span>
          </div>
        </Block>

        <div className="ml-[35px] flex w-[1091px] flex-col gap-[9px]">
          <Section h="h-[169px]">
            <Item kind="pdf">Peer Leaders Allocation</Item>
            <Item kind="assign">Lab Exam Submission</Item>
          </Section>
          <Section title="2 January - 8 January" h="h-[196px]">
            <Item kind="pdf">Variables: types, storage allocation and management [in C]</Item>
            <Item kind="pdf">Some examples related to storage management in C</Item>
          </Section>
          <Section title="9 January - 15 January" h="h-[420px]">
            <Item kind="assign">Lab 01</Item>
            <Item kind="pdf">Working with Java Objects (updated)</Item>
            <Item kind="file">Interface of Rectangle object</Item>
            <Item kind="pdf">Introduction to Basic IO objects in Java</Item>
            <Item kind="file">Scanner Object - short interface description</Item>
            <Item kind="file">String Object - short interface description</Item>
            <Item kind="src">Java Source Code - IO examples</Item>
          </Section>
        </div>

        <div className="-mt-[2px] ml-[35px] flex w-[315px] flex-col">
          <Block title="Search forums" h="h-[129px]">
            <div className="flex pl-[13px] pt-[7px]">
              <div className="mt-[1px] h-8 w-[229px] border border-[#a3a3a3] bg-white" />
              <button className="h-[35px] w-[57px] rounded-[2px] border border-[#9a9a9a] bg-[linear-gradient(180deg,#f6f6f6,#dcdcdc)] pb-[2px] leading-[30px]">Go</button>
            </div>
            <div className="flex pl-[51px]">
              <A className="mt-[1px] w-[182px] whitespace-nowrap">Advanced search</A>
              <svg className="mt-[3px]" width="28" height="28" viewBox="0 0 28 28" fill="none" stroke="#999">
                <circle cx="14" cy="14" r="12.300" strokeWidth="3.200" />
                <path d="M9.500 11 Q9.500 6.500 14 6.500 Q18.500 6.500 18.500 10.500 Q18.500 13 16 14 Q14 15 14 17" strokeWidth="3.400" />
                <circle cx="14" cy="20.800" r="2.300" fill="#999" stroke="none" />
              </svg>
            </div>
          </Block>
          <Block title="Upcoming events" h="mt-[24px] h-[186px]">
            <p className="w-[290px] pl-[7px] pt-[7px]">There are no upcoming events</p>
            <div className="pt-[11px] text-center text-[20px] leading-[25px]"><A>Go to calendar</A>...<br /><A>New event</A>...</div>
          </Block>
          <Block title="Recent activity" h="mt-[25px] h-[216px]">
            <div className="px-5 pt-[7px] text-center text-[20px] leading-[25px]">Activity since Sunday, 23 April 2017, 6:01 PM<br /><A className="whitespace-nowrap">Full report of recent activity...</A></div>
            <p className="-mt-px w-[300px] pl-[7px]">Nothing new since your last login</p>
          </Block>
        </div>
      </div>
    </main>
  );
}

export default function App() {
  return (
    <div className="flex h-[1080px] w-[1920px] flex-col overflow-hidden bg-[#fafafa]">
      <Panel />
      <div className="flex h-[1056px]">
        <Launcher />
        <div className={"relative flex w-[1855px] flex-col " + UI}>
          <TabStrip />
          <Toolbar />
          <Bookmarks />
          <div className="flex">
            <div className="w-[1840px]"><CoursePage /></div>
            <div className="flex h-[966px] w-[15px] flex-col items-center bg-[#f1f1f1]">
              <div className="mt-[6px] h-0 w-0 border-x-[4px] border-b-[4px] border-x-transparent border-b-[#a3a3a3]" />
              <div className="mt-[5px] h-[155px] w-[11px] bg-[#c1c1c1]" />
              <div className="mb-[5px] mt-auto h-0 w-0 border-x-[4px] border-t-[4px] border-x-transparent border-t-[#505050]" />
            </div>
          </div>
          <div className="absolute bottom-0 left-0 h-[23px] w-[617px] whitespace-nowrap rounded-tr-[4px] border-r border-t border-[#cfcfcf] bg-[#f2f2f2] pl-[3px] text-[15px] leading-[20px] tracking-[-0.03px] text-[#5a5a5a]">Waiting for courses.daiict.ac.in…</div>
        </div>
      </div>
    </div>
  );
}
